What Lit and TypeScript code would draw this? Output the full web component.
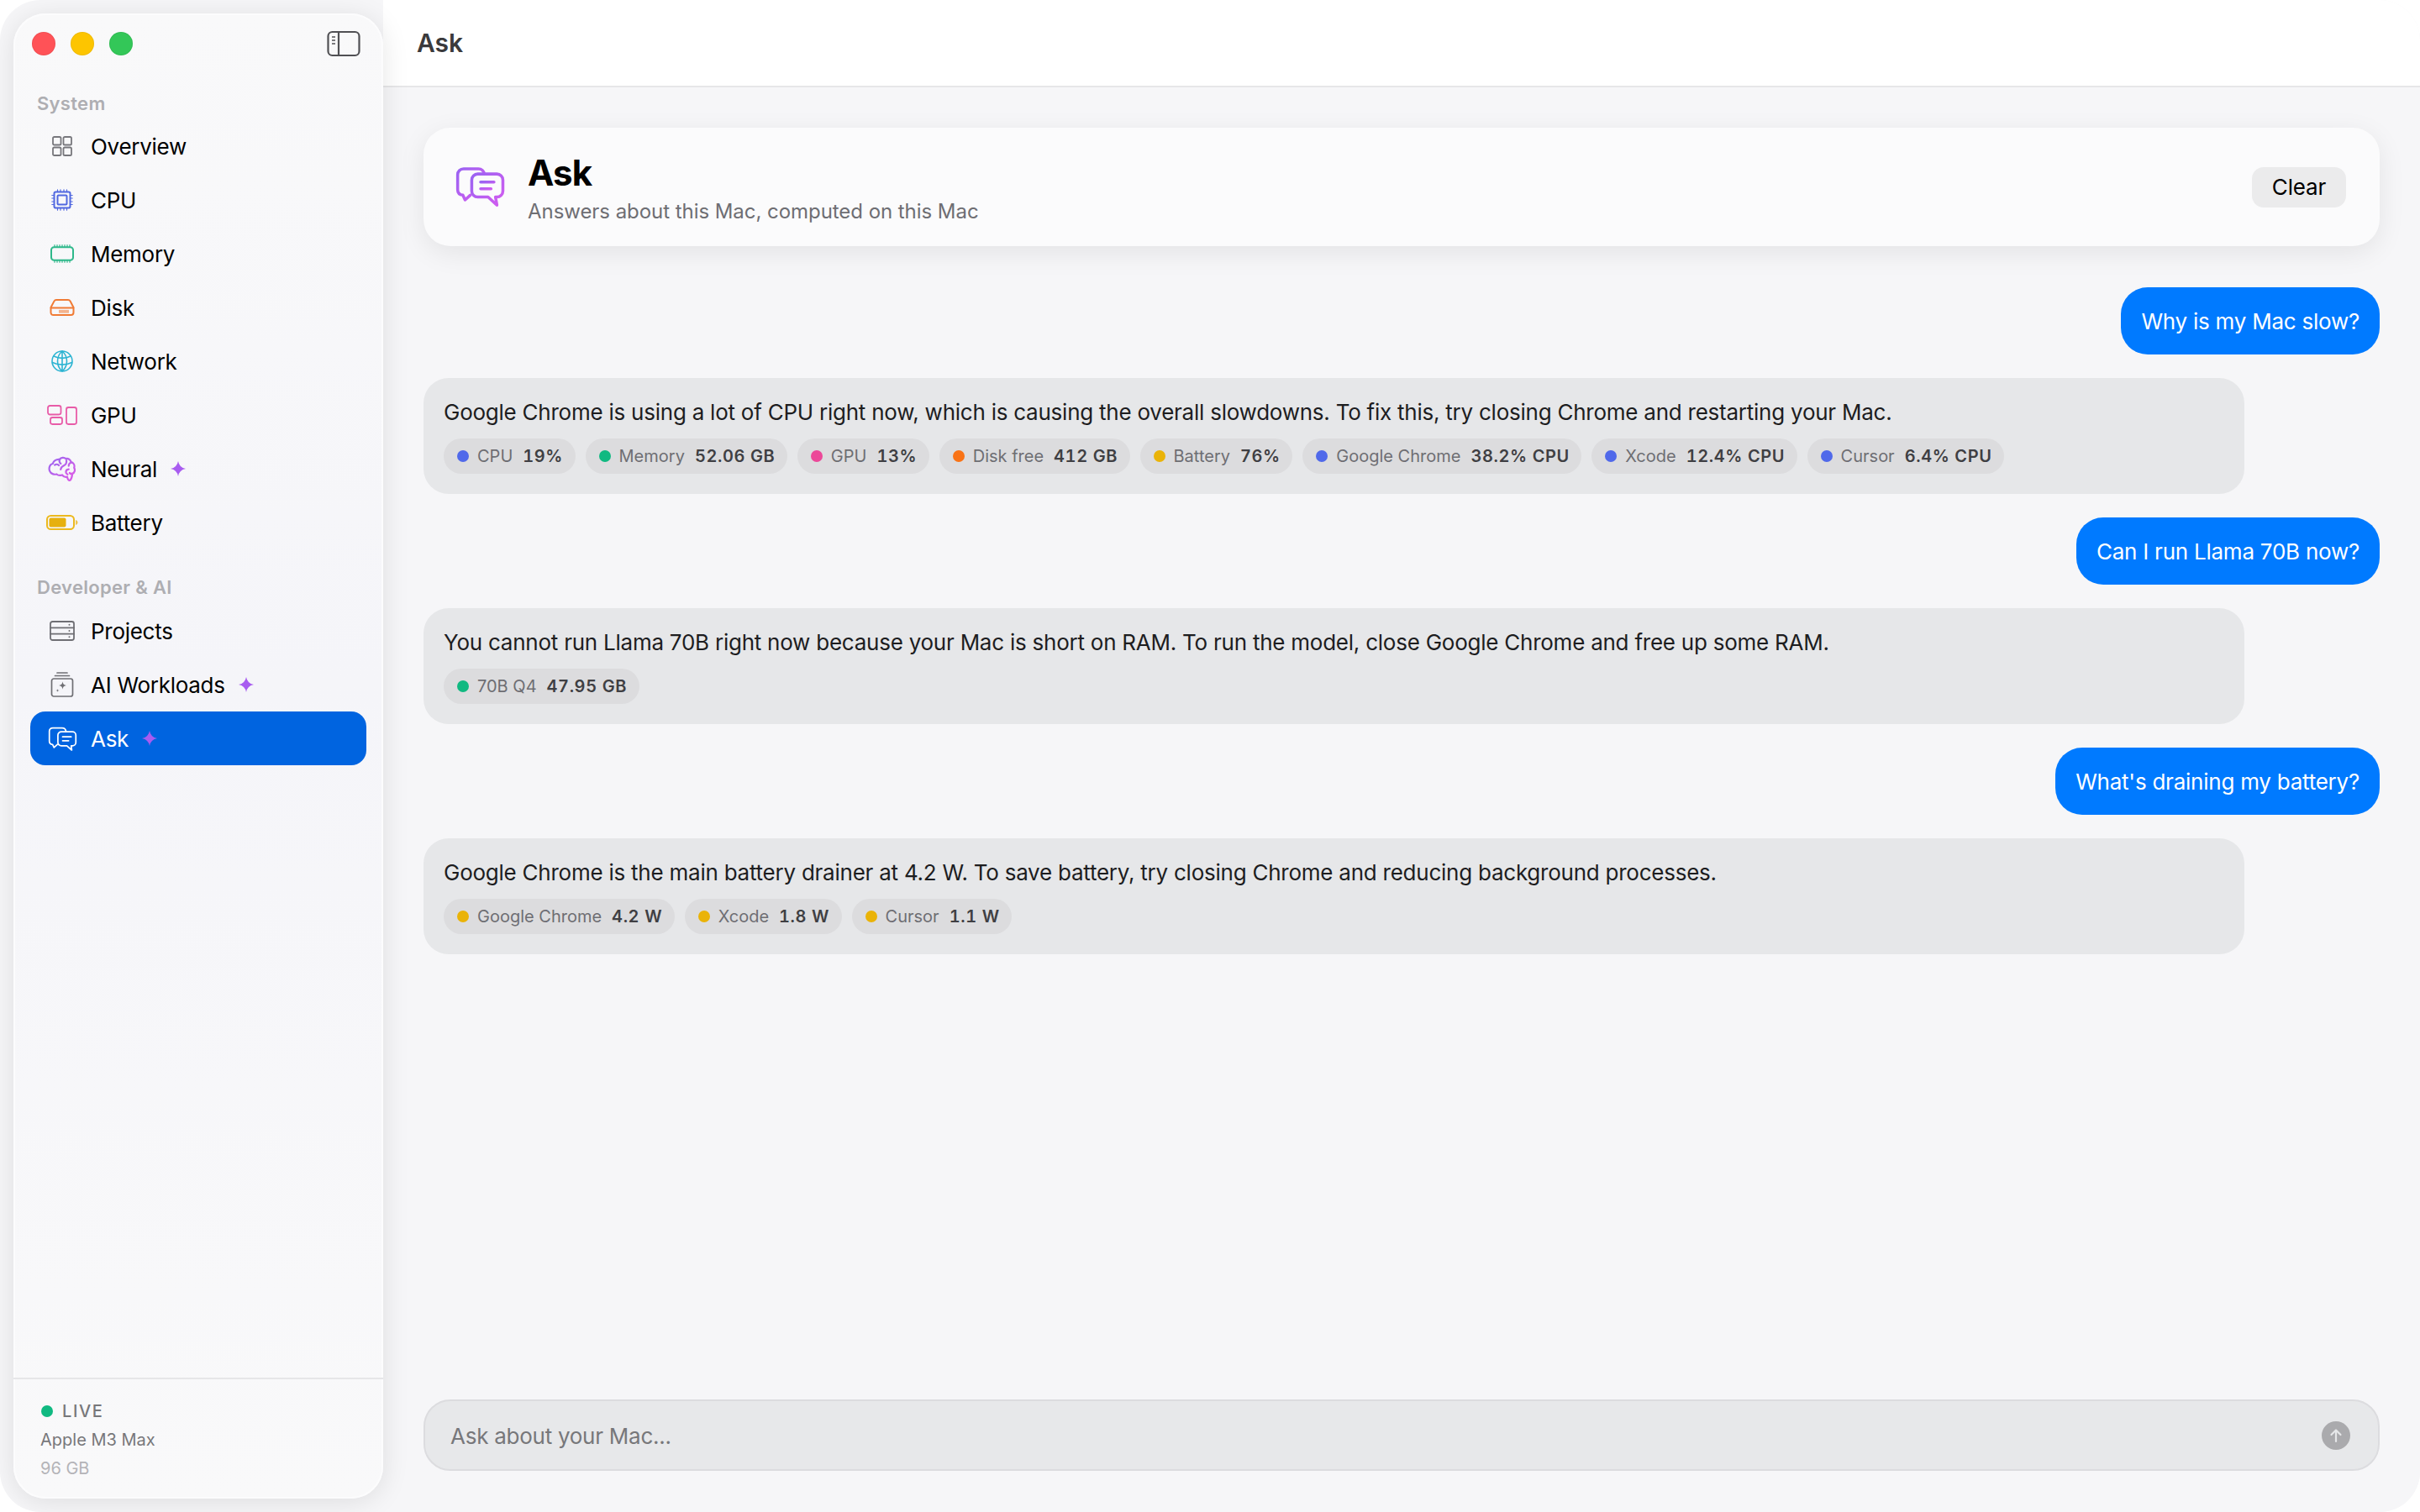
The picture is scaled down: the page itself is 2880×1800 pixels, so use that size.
import { LitElement, html, css, svg } from "lit";
import { customElement } from "lit/decorators.js";

const sw = (inner: unknown, w: number, h: number, vb: string, color: string, sWidth = 1.5) => html`<svg
  width=${w} height=${h} viewBox=${vb} fill="none" stroke=${color} stroke-width=${sWidth} stroke-linecap="round" stroke-linejoin="round">${inner}</svg>`;

const icons: Record<string, unknown> = {
  overview: sw(svg`<rect x="1" y="1" width="9.500" height="9.500" rx="1.600"/><rect x="13.500" y="1" width="9.500" height="9.500" rx="1.600"/><rect x="1" y="13.500" width="9.500" height="9.500" rx="1.600"/><rect x="13.500" y="13.500" width="9.500" height="9.500" rx="1.600"/>`, 24, 24, "0 0 24 24", "#77777c", 1.8),
  cpu: sw(svg`<rect x="3.500" y="3.500" width="19" height="19" rx="1.800"/><rect x="7.500" y="7.500" width="11" height="11" rx="1"/><path stroke-width="1.200" d="M7.500 3.500V.8M11 3.500V.8M15 3.500V.8M18.500 3.500V.8M7.500 25.200V22.500M11 25.200V22.500M15 25.200V22.500M18.500 25.200V22.500M.8 7.500H3.500M.8 11H3.500M.8 15H3.500M.8 18.500H3.500M22.500 7.500h2.700M22.500 11h2.700M22.500 15h2.700M22.500 18.500h2.700"/>`, 26, 26, "0 0 26 26", "#5168e0", 2),
  memory: sw(svg`<rect x="1" y="3.200" width="26" height="15.600" rx="3.400"/><path stroke-width="1.200" d="M5 3V.7M8 3V.7M11 3V.7M14 3V.7M17 3V.7M20 3V.7M23 3V.7M5 21.300V19M8 21.300V19M11 21.300V19M14 21.300V19M17 21.300V19M20 21.300V19M23 21.300V19"/>`, 28, 22, "0 0 28 22", "#2eb88a", 2),
  disk: sw(svg`<path d="M8 1h14c1.200 0 2 .5 2.600 1.600L28.500 10v6c0 1.800-1.200 3-3 3h-21c-1.800 0-3-1.200-3-3v-6l3.900-7.400C6 1.500 6.800 1 8 1z"/><path d="M1.700 10.500h26.600"/><path stroke-width="1.100" d="M12 13.200v3M14 13.200v3M16 13.200v3M18 13.200v3M20 13.200v3M22 13.200v3"/>`, 30, 20, "0 0 30 20", "#f07b35", 2),
  network: sw(svg`<circle cx="13" cy="13" r="12"/><path d="M13 1c-3.500 3-5.500 7-5.500 12s2 9 5.500 12M13 1c3.500 3 5.500 7 5.500 12s-2 9-5.500 12M13 1v24"/><path d="M3 7c3 1.600 6.500 2.400 10 2.400S20 8.600 23 7M1.500 14.500c3.500 1.800 7.500 2.600 11.500 2.600s8-.8 11.500-2.600"/>`, 26, 26, "0 0 26 26", "#2db4d2", 1.6),
  gpu: sw(svg`<rect x="1" y="1" width="15.500" height="10.500" rx="2.400"/><rect x="4" y="15" width="14" height="8" rx="2.400"/><rect x="23" y="3" width="12" height="20" rx="2.400"/>`, 36, 24, "0 0 36 24", "#e85ca8", 1.8),
  neural: sw(svg`<defs><linearGradient id="nb" x1="0" y1="0" x2="1" y2="1"><stop offset="0" stop-color="#9b66f0"/><stop offset="1" stop-color="#dc5ce6"/></linearGradient></defs><path d="M12 3.500C13.800 1.500 17 1 19 2.800c2.200-.6 5 .8 5.400 3.400 2.700.9 4.300 3.500 3.400 6.300 1.500 2.400.4 5.500-2 6.500-.1 1.800-.6 5-2.200 6.800-1.700 1-3-1.800-3.200-3.600-2 .5-4.300-.2-5.400-2-2 .7-4.600.4-6-.9-2.700.9-6.300-.6-7.300-3.200-1.500-3.600.3-7.600 3.200-8 .4-2.600 3.900-5.100 7.100-4.600z"/><path d="M12.500 3.500c-1 1.500-.6 3.500 1 4.500M7 9.500c1.500-1.200 3.500-.8 4.500.4M19.500 4.500c.4 2.400-.5 4.500-2.400 5.500-1.700.8-3.500 2.200-3.700 4.400M24.500 7c-1.700.6-2.600 2-2.500 3.500M22 14c-1.800.2-3 1.400-3 3 0 1 .6 2 1.800 2.600M26 18.500c-1.300.7-2.500.2-3-.5"/>`, 34, 30, "0 0 30 27", "url(#nb)", 2),
  battery: html`<svg width="38" height="18" viewBox="0 0 38 18" fill="none"><rect x="1" y="1" width="32" height="16" rx="4.500" stroke="#ecb91e" stroke-width="2"/><rect x="3.500" y="3.500" width="20" height="11" rx="2" fill="#e6b00e"/><path d="M35 6c1.800.6 2.500 1.600 2.500 3s-.7 2.400-2.500 3z" fill="#ecc553"/></svg>`,
  projects: sw(svg`<rect x="1" y="1" width="28" height="22" rx="2.500"/><path d="M1 8.300h28M1 15.700h28"/><circle cx="23.500" cy="4.700" r="1" fill="#6f6f74" stroke="none"/><circle cx="23.500" cy="12" r="1" fill="#6f6f74" stroke="none"/><circle cx="23.500" cy="19.300" r="1" fill="#6f6f74" stroke="none"/>`, 30, 24, "0 0 30 24", "#6f6f74", 1.8),
  workloads: html`<svg width="28" height="30" viewBox="0 0 28 30" fill="none" stroke="#6f6f74" stroke-width="1.700" stroke-linecap="round"><path d="M8 1h12M5.500 4.500h17"/><rect x="1.500" y="8" width="25" height="21" rx="2.500"/><path d="M14.500 11.500c.6 3 1.600 4 4.500 4.500-2.900.5-3.900 1.500-4.500 4.500-.6-3-1.600-4-4.500-4.500 2.900-.5 3.900-1.500 4.500-4.500z" fill="#6f6f74" stroke="none"/><path d="M8.500 20c.2 1.500.6 1.900 2 2-1.400.2-1.800.6-2 2-.2-1.400-.6-1.800-2-2 1.400-.1 1.800-.5 2-2z" fill="#6f6f74" stroke="none"/></svg>`,
  ask: sw(svg`<path d="M21 5.500C20.600 3 19 1.500 16.500 1.500H5.500c-2.300 0-4 1.700-4 4V17c0 2.300 1.700 3.800 3.800 4l1.700 3.500 4-3.800"/><path d="M15.500 6h13c2.200 0 4 1.800 4 4v8.500c0 2.200-1.800 4-4 4h-1.500l.7 5-5.700-5H15.500c-2.200 0-4-1.800-4-4V10c0-2.200 1.800-4 4-4z"/><path d="M17 12h10M17 16.500h7"/>`, 37, 29, "0 0 34 28.500", "#ffffff", 1.7),
};

const sparkle = html`<svg class="spark" width="18" height="18" viewBox="0 0 18 18"><path d="M9 0Q10.400 7.600 18 9 10.400 10.400 9 18 7.600 10.400 0 9 7.600 7.600 9 0z" fill="#a85cf0"/></svg>`;

type Nav = { k: string; label: string; spark?: boolean; active?: boolean };
const system: Nav[] = [
  { k: "overview", label: "Overview" },
  { k: "cpu", label: "CPU" },
  { k: "memory", label: "Memory" },
  { k: "disk", label: "Disk" },
  { k: "network", label: "Network" },
  { k: "gpu", label: "GPU" },
  { k: "neural", label: "Neural", spark: true },
  { k: "battery", label: "Battery" },
];
const dev: Nav[] = [
  { k: "projects", label: "Projects" },
  { k: "workloads", label: "AI Workloads", spark: true },
  { k: "ask", label: "Ask", spark: true, active: true },
];

const C = { blue: "#5069ea", green: "#10b981", pink: "#ec4899", orange: "#f97316", amber: "#eab308" };
type Chip = [string, string, string];
const convo: { q: string; a: string; chips: Chip[] }[] = [
  {
    q: "Why is my Mac slow?",
    a: "Google Chrome is using a lot of CPU right now, which is causing the overall slowdowns. To fix this, try closing Chrome and restarting your Mac.",
    chips: [
      [C.blue, "CPU", "19%"],
      [C.green, "Memory", "52.06 GB"],
      [C.pink, "GPU", "13%"],
      [C.orange, "Disk free", "412 GB"],
      [C.amber, "Battery", "76%"],
      [C.blue, "Google Chrome", "38.2% CPU"],
      [C.blue, "Xcode", "12.4% CPU"],
      [C.blue, "Cursor", "6.4% CPU"],
    ],
  },
  {
    q: "Can I run Llama 70B now?",
    a: "You cannot run Llama 70B right now because your Mac is short on RAM. To run the model, close Google Chrome and free up some RAM.",
    chips: [[C.green, "70B Q4", "47.95 GB"]],
  },
  {
    q: "What's draining my battery?",
    a: "Google Chrome is the main battery drainer at 4.2 W. To save battery, try closing Chrome and reducing background processes.",
    chips: [
      [C.amber, "Google Chrome", "4.2 W"],
      [C.amber, "Xcode", "1.8 W"],
      [C.amber, "Cursor", "1.1 W"],
    ],
  },
];

@customElement("app-root")
export class AppRoot extends LitElement {
  static styles = css`
    :host { display: block; width: 2880px; height: 1800px; background: #fff; font-family: Inter, "Liberation Sans", sans-serif; color: #000; }
    * { box-sizing: border-box; }
    .window { width: 2880px; height: 1800px; display: flex; background: #f6f6f8; border-radius: 48px; overflow: hidden; }
    .sidebar { width: 440px; margin: 16px 0 16px 16px; flex: none; display: flex; flex-direction: column; border-radius: 38px; position: relative; z-index: 1;
      background: linear-gradient(180deg, #f9f9fa 0%, #f5f5f9 45%, #f9f9fa 100%); box-shadow: 0 0 0 2px #fcfcfd inset, 0 4px 32px rgba(0,0,0,.1); }
    .titlebar { height: 72px; padding: 0 27px 0 22px; display: flex; align-items: center; justify-content: space-between; flex: none; }
    .lights { display: flex; gap: 18px; }
    .light { width: 28px; height: 28px; border-radius: 50%; box-shadow: inset 0 0 0 1px rgba(0,0,0,.06); }
    .section { height: 30px; margin-top: 20px; padding-left: 28px; font-size: 22px; line-height: 30px; font-weight: 600; color: #aeaeb2; letter-spacing: .3px; }
    .section.second { margin-top: 30px; }
    .nav { margin: 4px 20px 0; display: flex; flex-direction: column; }
    .second + .nav { margin-top: 5px; }
    .item { height: 64px; border-radius: 18px; display: flex; align-items: center; color: #000; font-size: 26px; letter-spacing: -.28px; }
    .item.active { background: #0064e0; color: #fff; }
    .ic { width: 72px; flex: none; display: flex; align-items: center; justify-content: center; padding-left: 4px; }
    .spark { margin-left: 16px; flex: none; }
    .foot { margin-top: auto; border-top: 2px solid #e6e6e8; padding: 26px 32px 0; height: 144px; flex: none; }
    .live { display: flex; align-items: center; gap: 11px; font-size: 20px; line-height: 24px; letter-spacing: 1.6px; font-weight: 500; color: #77777a; }
    .live i { width: 14px; height: 14px; border-radius: 50%; background: #10b981; margin-left: 1px; }
    .chipname { font-size: 20px; line-height: 26px; margin-top: 9px; color: #77777a; }
    .mem { font-size: 20px; line-height: 26px; margin-top: 8px; color: #b4b4b8; }

    .main { flex: 1; min-width: 0; display: flex; flex-direction: column; }
    .header { height: 104px; flex: none; background: #fff; border-bottom: 2px solid #e6e6e8; padding: 0 40px; display: flex; align-items: center; font-size: 30px; font-weight: 600; color: #3a3a3c; }
    .content { flex: 1; min-height: 0; padding: 48px 48px 49px; display: flex; flex-direction: column; background: #f6f6f8; }
    .card { height: 141px; flex: none; border-radius: 32px; background: #fbfbfc; box-shadow: 0 8px 32px rgba(0,0,0,.08); display: flex; align-items: center; padding: 0 40px 0 38px; }
    .cardicon { width: 86px; flex: none; display: flex; }
    .titles { flex: 1; align-self: flex-start; padding-top: 29px; }
    .h1 { font-size: 42px; line-height: 50px; font-weight: 700; letter-spacing: -.8px; }
    .sub { font-size: 24px; line-height: 30px; color: #6e6e73; margin-top: 6px; letter-spacing: -.05px; }
    .clear { width: 112px; height: 48px; border-radius: 14px; background: #ebebec; display: flex; align-items: center; justify-content: center; font-size: 26px; letter-spacing: -.15px; }
    .msgs { margin-top: 49px; display: flex; flex-direction: column; gap: 28px; flex: 1; }
    .user { align-self: flex-end; height: 80px; border-radius: 32px; background: #007aff; color: #fff; padding: 0 24px; display: flex; align-items: center; font-size: 26px; letter-spacing: -.24px; }
    .bot { width: 2167px; height: 138px; border-radius: 30px; background: #e6e7e9; padding: 24px 24px 0; }
    .text { font-size: 26px; line-height: 34px; color: #1d1d1f; letter-spacing: -.24px; }
    .chips { display: flex; gap: 12px; margin-top: 14px; }
    .chip { height: 42px; border-radius: 21px; background: #dcdcde; display: flex; align-items: center; padding: 0 14.500px 0 16px; font-size: 20px; color: #6e6e73; }
    .chip i { width: 14px; height: 14px; border-radius: 50%; margin-right: 10px; }
    .chip b { margin-left: 12px; font-weight: 600; color: #3f3f43; letter-spacing: .6px; font-variant-numeric: tabular-nums; }
    .input { height: 85px; flex: none; border-radius: 32px; background: #e7e8ea; border: 2px solid #dcdcdf; display: flex; align-items: center; justify-content: space-between; padding: 2px 33px 0 30px; font-size: 26px; letter-spacing: -.26px; color: #77777a; }
    .send { width: 34px; height: 34px; border-radius: 50%; background: #aaaaad; display: flex; align-items: center; justify-content: center; margin-top: -2px; }
  `;

  private navItem(n: Nav) {
    return html`<div class="item ${n.active ? "active" : ""}">
      <span class="ic">${icons[n.k]}</span><span>${n.label}</span>${n.spark ? sparkle : ""}
    </div>`;
  }

  render() {
    return html`<div class="window">
      <aside class="sidebar">
        <div class="titlebar">
          <div class="lights">
            <div class="light" style="background:#ff5257"></div>
            <div class="light" style="background:#fdc500"></div>
            <div class="light" style="background:#33c758"></div>
          </div>
          <svg width="40" height="32" viewBox="0 0 40 32" fill="none" stroke="#505054" stroke-width="2.200"><rect x="1.500" y="2" width="37" height="28" rx="5"/><path d="M14 2v28"/><path stroke-width="1.500" d="M6 8h4M6 12h4M6 16h4"/></svg>
        </div>
        <div class="section">System</div>
        <div class="nav">${system.map((n) => this.navItem(n))}</div>
        <div class="section second">Developer &amp; AI</div>
        <div class="nav">${dev.map((n) => this.navItem(n))}</div>
        <div class="foot">
          <div class="live"><i></i>LIVE</div>
          <div class="chipname">Apple M3 Max</div>
          <div class="mem">96 GB</div>
        </div>
      </aside>
      <main class="main">
        <div class="header">Ask</div>
        <div class="content">
          <div class="card">
            <div class="cardicon">
              <svg width="60" height="48" viewBox="0 0 34 27" fill="none" stroke="url(#g)" stroke-width="2" stroke-linecap="round" stroke-linejoin="round">
                <defs><linearGradient id="g" x1="0" y1="0" x2="1" y2="1"><stop offset="0" stop-color="#9a63f2"/><stop offset="1" stop-color="#d45cf0"/></linearGradient></defs>
                <path d="M19.500 4.500c-.3-2-1.800-3.500-4-3.500H5.500C3.200 1 1.500 2.700 1.500 5v10c0 2.300 1.500 3.500 3.500 3.800l1.500 3.200 3.500-3.200"/>
                <path d="M15 4.500h13c2.200 0 4 1.800 4 4v7.500c0 2.200-1.800 4-4 4h-1l1 5.500-6-5.500H15c-2.200 0-4-1.800-4-4V8.500c0-2.200 1.800-4 4-4z"/>
                <path d="M17 10h9M17 14.500h7"/>
              </svg>
            </div>
            <div class="titles">
              <div class="h1">Ask</div>
              <div class="sub">Answers about this Mac, computed on this Mac</div>
            </div>
            <div class="clear">Clear</div>
          </div>
          <div class="msgs">
            ${convo.map(
              (c) => html`<div class="user">${c.q}</div>
                <div class="bot">
                  <div class="text">${c.a}</div>
                  <div class="chips">
                    ${c.chips.map((x) => html`<div class="chip"><i style="background:${x[0]}"></i>${x[1]}<b>${x[2]}</b></div>`)}
                  </div>
                </div>`
            )}
          </div>
          <div class="input">
            <span>Ask about your Mac...</span>
            <div class="send"><svg width="20" height="20" viewBox="0 0 20 20" fill="none" stroke="#e6e7e9" stroke-width="2.200" stroke-linecap="round" stroke-linejoin="round"><path d="M10 17V3.500M4.500 9L10 3.500 15.500 9"/></svg></div>
          </div>
        </div>
      </main>
    </div>`;
  }
}
